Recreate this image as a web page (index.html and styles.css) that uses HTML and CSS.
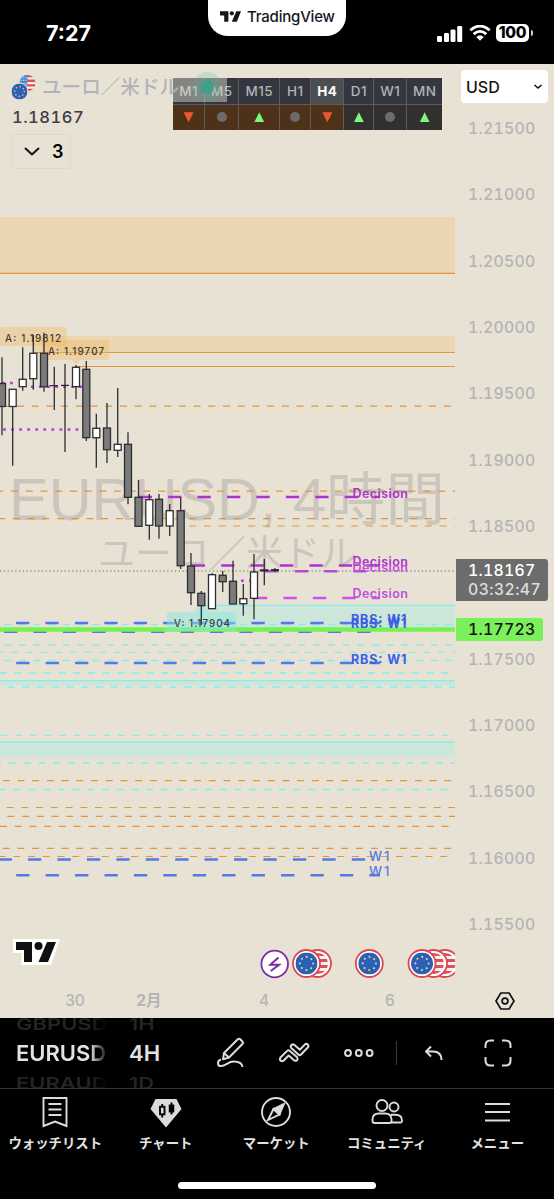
FILE: index.html
```html
<!DOCTYPE html>
<html lang="ja">
<head>
    <meta charset="utf-8">
    <title>EURUSD 4H - TradingView</title>
    <link rel="stylesheet" href="styles.css">
</head>
<body>
    <svg class="defs" width="0" height="0">
        <symbol id="eu" viewBox="0 0 24 24">
            <circle cx="12" cy="12" r="12" fill="#2a60b8"/>
            <circle cx="12" cy="12" r="7.2" fill="none" stroke="#e8d672" stroke-width="2.3" stroke-linecap="round" stroke-dasharray="0.01 5.645"/>
        </symbol>
        <symbol id="us" viewBox="0 0 24 24">
            <clipPath id="round"><circle cx="12" cy="12" r="12"/></clipPath>
            <g clip-path="url(#round)">
                <rect width="24" height="24" fill="#f5f0f0"/>
                <path d="M0 1.7h24M0 8.6h24M0 15.5h24M0 22.4h24" stroke="#dd5055" stroke-width="3.5"/>
                <rect width="12" height="13" fill="#4a8fd8"/>
                <path d="M2 4h10M2 8h10" stroke="#fff" stroke-width="1.2" stroke-dasharray="1.5 2"/>
            </g>
        </symbol>
        <symbol id="tv" viewBox="0 0 40 20">
            <path d="M0 0h16v20H8V8H0zM33 0h7l-8 20h-9.500L31 0z"/>
            <circle cx="22.500" cy="4" r="4"/>
        </symbol>
    </svg>

    <div class="app">
        <header class="status-bar">
            <div class="time">7:27</div>
            <div class="brand">
                <svg width="21" height="11"><use href="#tv"/></svg>
                <span>TradingView</span>
            </div>
            <div class="status-icons">
                <svg width="26" height="17" viewBox="0 0 26 17" fill="#fff">
                    <rect x="0" y="11" width="5" height="6" rx="1.300"/>
                    <rect x="7" y="8" width="5" height="9" rx="1.300"/>
                    <rect x="13.500" y="4.500" width="5" height="12.500" rx="1.300"/>
                    <rect x="20.200" y="1" width="5" height="16" rx="1.300"/>
                </svg>
                <svg width="22" height="16" viewBox="0 0 22 16" fill="none" stroke="#fff" stroke-width="2.800">
                    <path d="M1.300 5.300Q11-3.200 20.700 5.300"/>
                    <path d="M4.700 9.100Q11 3.700 17.300 9.100"/>
                    <path d="M11 15.800L7.300 11.900Q11 8.700 14.700 11.900z" fill="#fff" stroke="none"/>
                </svg>
                <div class="battery">100</div>
            </div>
        </header>

        <main class="chart">
            <div class="plot">
                <svg class="series" width="455" height="921" viewBox="0 64 455 921">
                    <!-- watermark -->
                    <g class="watermark">
                        <text x="9" y="520" font-size="58.500" textLength="436" lengthAdjust="spacingAndGlyphs">EURUSD, 4時間</text>
                        <text x="98" y="567" font-size="37" textLength="259">ユーロ／米ドル</text>
                    </g>

                    <!-- supply and demand zones -->
                    <g class="supply">
                        <rect x="0" y="217" width="455" height="56"/>
                        <rect x="33" y="336" width="422" height="16.500"/>
                    </g>
                    <g class="demand">
                        <rect x="198" y="605" width="257" height="24"/>
                        <rect x="0" y="681" width="455" height="4.500"/>
                        <rect x="0" y="741.500" width="455" height="15.500"/>
                    </g>
                    <path class="orange" d="M0 273.300H455M33 352.500H455M75 366.500H455"/>
                    <path class="cyan" d="M198 605.300H455M0 680.700H455M0 742H455"/>
                    <path class="orange dash" d="M2.200 406.200H455M-3.700 491.200H455M-1.900 518.700H455M189.300 526H455M2.700 780.700H455M6.700 807.500H455M7.300 816.300H455M0 826.400H455M2.700 848.400H455M-1.400 856.500H455"/>
                    <path class="cyan dash" d="M4 624.700H455M4 645H455M-4 652.400H455M4 660.500H455M-.4 673H455M-7 687H455M.3 735.400H455M-5.700 763H455M-1 789.500H455"/>

                    <!-- labelled levels -->
                    <path class="level w1" d="M16 622.900H380M4 631.800H373M16.200 662.900H380M-1.400 859.600H380M16.200 875.300H380"/>
                    <path class="level decision" d="M138.700 497H380M191.700 565.500H380"/>
                    <path class="level decision-mid" d="M265.300 571.300H366"/>
                    <path class="level decision-new" d="M254 598.100H380"/>
                    <path class="dots" d="M3.100 429.500H90M31 386.700H84M2 383H16M241 580.700H252M41.500 378.700H44"/>

                    <path class="live" d="M0 629.500H455"/>
                    <path class="price-line" d="M0 571H455"/>

                    <g class="tag-high">
                        <rect x="0" y="327" width="66.500" height="19" rx="2"/>
                        <path d="M42 340H107a2 2 0 0 1 2 2V358a2 2 0 0 1-2 2H80L76 365L72 360H42z"/>
                    </g>
                    <path class="tag-low" d="M169 612H194L201 605L208 612H234a2 2 0 0 1 2 2V629a2 2 0 0 1-2 2H169a2 2 0 0 1-2-2V614a2 2 0 0 1 2-2z"/>

                    <!-- candles -->
                    <g class="down">
                        <path d="M2 357.300V435.300M44 332.700V391.700M86.300 361V441M107 403V463M128 432.300V504.300M138.500 480V526M159 494V538.700M180.700 497.300V569M191 553V605M201.300 591V625M222.700 571V592M233 560.700V604"/>
                        <rect x="-1.500" y="383.500" width="7" height="23"/>
                        <rect x="40.500" y="353.300" width="7" height="33.400"/>
                        <rect x="82.800" y="369.300" width="7" height="68.400"/>
                        <rect x="103.500" y="428" width="7" height="21.700"/>
                        <rect x="124.500" y="444.300" width="7" height="53"/>
                        <rect x="135" y="497.300" width="7" height="29"/>
                        <rect x="155.500" y="499.300" width="7" height="26.700"/>
                        <rect x="177.200" y="510.700" width="7" height="55"/>
                        <rect x="187.500" y="566" width="7" height="26.700"/>
                        <rect x="197.800" y="593.300" width="7" height="12.400"/>
                        <rect x="219.200" y="575.300" width="7" height="6.400"/>
                        <rect x="229.500" y="581.300" width="7" height="22.700"/>
                    </g>
                    <g class="up">
                        <path d="M12.700 389V465.700M22.700 347.300V390.700M33.300 335V389.700M76 365V399.300M96.300 413.700V467.700M117.700 388V457M149.300 494V539.700M169.700 504V536M212 573V608M243.300 584V615.700M254 554V619.300"/>
                        <rect x="9.200" y="389.300" width="7" height="17.200"/>
                        <rect x="19.200" y="379.300" width="7" height="7.400"/>
                        <rect x="29.800" y="353.300" width="7" height="25.400"/>
                        <rect x="72.500" y="367.300" width="7" height="19.400"/>
                        <rect x="92.800" y="428.300" width="7" height="9.400"/>
                        <rect x="114.200" y="444.300" width="7" height="6"/>
                        <rect x="145.800" y="499.700" width="7" height="25.600"/>
                        <rect x="166.200" y="510.700" width="7" height="15.300"/>
                        <rect x="208.500" y="574.700" width="7" height="34"/>
                        <rect x="239.800" y="598.700" width="7" height="5"/>
                        <rect x="250.500" y="572" width="7" height="26.300"/>
                    </g>
                    <path class="doji" d="M54.300 366.700V410M50 385.700H58M65 364V452M61 385.300H69M264.300 559V585.300M275 568V572"/>
                    <path class="doji thick" d="M260 570.400H268.500M271 570H279"/>

                    <g class="marks">
                        <text x="5" y="341.500" textLength="56">A: 1.19812</text>
                        <text x="48" y="355" textLength="56">A: 1.19707</text>
                        <text x="174" y="626.500" textLength="56">V: 1.17904</text>
                    </g>
                    <g class="level-text">
                        <text class="t-decision" x="352.500" y="498" textLength="55.500">Decision</text>
                        <text class="t-decision" x="352.500" y="566" textLength="55.500">Decision</text>
                        <text class="t-new" x="352.500" y="571.500" textLength="55.500">Decision</text>
                        <text class="t-new" x="352.500" y="598.300" textLength="55.500">Decision</text>
                        <text class="t-rbs" x="351" y="623.500" textLength="55.500">RBS: W1</text>
                        <text class="t-rbs" x="351" y="627.500" textLength="55.500">RBS: W1</text>
                        <text class="t-rbs" x="351" y="664" textLength="55.500">RBS: W1</text>
                        <text class="t-w1" x="369" y="860.500" textLength="20.500">W1</text>
                        <text class="t-w1" x="369" y="875.500" textLength="20.500">W1</text>
                    </g>

                    <!-- logo -->
                    <path d="M13 939H60L51 965H21.500V953H13z" fill="#fff"/>
                    <use href="#tv" x="16" y="942" width="40" height="20" fill="#101010"/>

                    <!-- economic events -->
                    <g class="event-flash">
                        <circle cx="274.700" cy="964" r="13.300"/>
                        <path d="M278.500 957.500L270.300 964.800H279L270.800 971"/>
                    </g>
                    <g class="event">
                        <circle cx="317.500" cy="963.500" r="13.500"/>
                        <use href="#us" x="307" y="953" width="21" height="21"/>
                        <circle cx="306.500" cy="963.500" r="13.500"/>
                        <use href="#eu" x="295.500" y="952.500" width="22" height="22"/>
                        <circle cx="369.300" cy="963.500" r="13.500"/>
                        <use href="#eu" x="358.300" y="952.500" width="22" height="22"/>
                        <circle cx="445" cy="963.500" r="13.500"/>
                        <use href="#us" x="434.500" y="953" width="21" height="21"/>
                        <circle cx="433.500" cy="963.500" r="13.500"/>
                        <use href="#us" x="423" y="953" width="21" height="21"/>
                        <circle cx="422" cy="963.500" r="13.500"/>
                        <use href="#eu" x="411" y="952.500" width="22" height="22"/>
                    </g>
                </svg>

                <table class="mtf">
                    <colgroup>
                        <col style="width:31.700px"><col style="width:34px"><col style="width:41px"><col style="width:31px">
                        <col style="width:33px"><col style="width:30px"><col style="width:33px"><col style="width:35px">
                    </colgroup>
                    <tr>
                        <th>M1</th><th>M5</th><th>M15</th><th>H1</th><th class="current">H4</th><th>D1</th><th>W1</th><th>MN</th>
                    </tr>
                    <tr>
                        <td class="warm"><i class="fall"></i></td>
                        <td class="warm"><i class="flat"></i></td>
                        <td class="warm"><i class="rise"></i></td>
                        <td class="warm"><i class="flat"></i></td>
                        <td class="warm"><i class="fall"></i></td>
                        <td><i class="rise"></i></td>
                        <td><i class="flat"></i></td>
                        <td><i class="rise"></i></td>
                    </tr>
                </table>

                <div class="legend">
                    <div class="symbol">
                        <svg width="26" height="26" viewBox="0 0 26 26">
                            <use href="#us" x="8.500" y="0" width="16" height="16"/>
                            <circle cx="8.500" cy="16.500" r="9" fill="#e8e2d5"/>
                            <use href="#eu" x=".5" y="8.500" width="16" height="16"/>
                        </svg>
                        <span>ユーロ／米ドル</span>
                    </div>
                    <div class="last">1.18167</div>
                    <div class="indicators">
                        <svg width="18" height="11" viewBox="0 0 18 11"><path d="M2 2l7 6.500L16 2" fill="none" stroke="#111" stroke-width="2"/></svg>
                        <span>3</span>
                    </div>
                </div>
                <div class="market-open"></div>
            </div>

            <aside class="price-axis">
                <div class="currency">
                    <span>USD</span>
                    <svg width="10" height="6" viewBox="0 0 10 6"><path d="M1.500 1l3.500 3 3.500-3" fill="none" stroke="#111" stroke-width="1.600"/></svg>
                </div>
                <ul class="prices">
                    <li>1.21500</li>
                    <li>1.21000</li>
                    <li>1.20500</li>
                    <li>1.20000</li>
                    <li>1.19500</li>
                    <li>1.19000</li>
                    <li>1.18500</li>
                    <li class="covered"></li>
                    <li>1.17500</li>
                    <li>1.17000</li>
                    <li>1.16500</li>
                    <li>1.16000</li>
                    <li>1.15500</li>
                </ul>
                <div class="price-tag now">1.18167<span>03:32:47</span></div>
                <div class="price-tag alert">1.17723</div>
            </aside>

            <div class="time-axis">
                <span>30</span>
                <span class="month">2月</span>
                <span>4</span>
                <span>6</span>
                <svg width="20" height="18" viewBox="0 0 20 18" fill="none" stroke="#111" stroke-width="1.700">
                    <path d="M5.800 1h8.400L19 9l-4.800 8H5.800L1 9z"/>
                    <circle cx="10" cy="9" r="2.900"/>
                </svg>
            </div>
        </main>

        <div class="toolbar">
            <div class="wheel wheel-symbol">
                <span class="off">GBPUSD</span>
                <span>EURUSD</span>
                <span class="off">EURAUD</span>
            </div>
            <div class="wheel wheel-interval">
                <span class="off">1H</span>
                <span>4H</span>
                <span class="off">1D</span>
            </div>
            <div class="tools">
                <svg width="30" height="32" viewBox="0 0 30 32">
                    <path d="M8 16L21.500 2.500q1.500-1.500 3 0l1.700 1.700q1.500 1.500 0 3L13 20.500l-6 1.700zM8 16l5 4.500"/>
                    <path d="M5 22.500C1 23.500 1 29 5 29c5 0 7-4.500 12.500-4.500 4.500 0 8.500 1.500 9 5.500"/>
                </svg>
                <svg width="32" height="22" viewBox="0 0 32 22">
                    <path d="M2.200 15.800L9.200 8.900q1.300-1.400 2.600 0l7.400 6.300q1 1.800-.2 3-1.500 1.200-3 0l-5.300-4.700-5 5q-1.700 1.400-3.200.1-1-1.200-.3-2.800z"/>
                    <path d="M13 3.500q1.700-2 3.500-.5l5.300 4.800 5-5.200q1.500-1.400 3-.1 1.100 1.200.2 2.700l-7 7.300q-1.300 1.300-2.700 0L13.300 6q-1-1.200-.3-2.500z"/>
                </svg>
                <svg width="30" height="10" viewBox="0 0 30 10">
                    <circle cx="4" cy="5" r="2.900"/><circle cx="14.800" cy="5" r="2.900"/><circle cx="25.600" cy="5" r="2.900"/>
                </svg>
                <i class="divider"></i>
                <svg width="20" height="16" viewBox="0 0 20 16"><path d="M7 1.500L2 6.500l5 5M2 6.500h7q8.500 0 8.500 8.500"/></svg>
                <svg width="28" height="28" viewBox="0 0 28 28"><path d="M1.500 9V6.500q0-5 5-5H10M18 1.500h3.500q5 0 5 5V9M26.500 18v3.500q0 5-5 5H18M10 26.500H6.500q-5 0-5-5V18"/></svg>
            </div>
        </div>

        <nav class="tabs">
            <a class="tab">
                <svg width="32" height="32" viewBox="0 0 32 32"><path d="M4.500 2h23v28L16 25.500 4.500 30zM9.500 8h13M9.500 13.500h13M9.500 19h13"/></svg>
                <span>ウォッチリスト</span>
            </a>
            <a class="tab">
                <svg width="32" height="32" viewBox="0 0 32 32">
                    <path d="M5.500 3h21L31.500 13 16 31.500.5 13z" fill="#dcdcdc" stroke="none"/>
                    <path d="M12.200 8v3M12.200 18v3.500M21.500 6.500v12" stroke="#050505"/>
                    <rect x="10" y="10.800" width="4.500" height="7.500" fill="#dcdcdc" stroke="#050505"/>
                    <rect x="19.700" y="9.500" width="3.600" height="6" fill="#050505" stroke="#050505"/>
                </svg>
                <span>チャート</span>
            </a>
            <a class="tab">
                <svg width="32" height="32" viewBox="0 0 32 32">
                    <circle cx="16" cy="16" r="14"/>
                    <path d="M24 8L19.500 18.500l-6-5.500z" fill="#dcdcdc"/>
                    <path d="M13.500 13L8 24l11.500-5.500z"/>
                </svg>
                <span>マーケット</span>
            </a>
            <a class="tab">
                <svg width="32" height="32" viewBox="0 0 32 32">
                    <circle cx="11" cy="9.500" r="5.500"/>
                    <circle cx="23" cy="11" r="4.500"/>
                    <path d="M1.500 25v-1.500q0-6 6.500-6h6q6.500 0 6.500 6V25q0 2-2 2h-15q-2 0-2-2zM20 18.800h4.500q6.500 0 6.500 5.700v.5q0 1.500-1.500 1.500H20"/>
                </svg>
                <span>コミュニティ</span>
            </a>
            <a class="tab">
                <svg width="32" height="32" viewBox="0 0 32 32"><path d="M4 8h25M4 16h25M4 24.500h25"/></svg>
                <span>メニュー</span>
            </a>
        </nav>
        <div class="home-bar"></div>
    </div>
</body>
</html>
```
FILE: styles.css
```css
:root {
    --paper: #e8e2d5;
    --axis-text: #b4b4b5;
    --icon: #dcdcdc;
    --orange: #e2953a;
    --cyan: #83efe8;
}
* {
    box-sizing: border-box;
}
body {
    margin: 0;
    background: #000;
    font-family: Inter, "Noto Sans CJK JP", sans-serif;
}
.defs {
    position: absolute;
}
.app {
    display: flex;
    flex-direction: column;
    width: 554px;
    height: 1199px;
    overflow: hidden;
}

/* status bar */
.status-bar {
    display: grid;
    grid-template-columns: 208px 138px 1fr;
    height: 64px;
    color: #fff;
}
.time {
    padding: 20px 0 0 46px;
    font-size: 21.500px;
    font-weight: 700;
    line-height: 26px;
}
.brand {
    display: flex;
    align-items: center;
    gap: 6px;
    height: 36px;
    padding: 0 0 3px 12px;
    border-radius: 0 0 20px 20px;
    background: #fff;
    color: #15171f;
    fill: #15171f;
    font-size: 15px;
    font-weight: 500;
    letter-spacing: -0.200px;
}
.status-icons {
    display: flex;
    align-items: center;
    gap: 6px;
    height: 18px;
    margin: 24px 0 0 91px;
}
.battery {
    position: relative;
    width: 33px;
    height: 18px;
    margin-left: -1px;
    border-radius: 5px;
    background: #fff;
    color: #000;
    font-size: 15.500px;
    font-weight: 800;
    line-height: 18px;
    text-align: center;
    letter-spacing: -0.300px;
}
.battery::after {
    content: "";
    position: absolute;
    right: -3.500px;
    top: 6px;
    width: 2px;
    height: 6px;
    border-radius: 0 2px 2px 0;
    background: #ccc;
}

/* chart */
.chart {
    display: grid;
    grid-template-columns: 455px 99px;
    grid-template-rows: 921px 33px;
    height: 954px;
    background: var(--paper);
}
.plot {
    position: relative;
}
.series {
    display: block;
}
.watermark {
    fill: #cbc5bb;
    font-family: "Liberation Sans", "Noto Sans CJK JP", sans-serif;
    font-weight: 400;
}
.supply {
    fill: #ecc88a;
    fill-opacity: 0.450;
}
.demand {
    fill: #a8ebe2;
    fill-opacity: 0.420;
}
.orange {
    stroke: var(--orange);
    stroke-width: 1.200;
}
.cyan {
    stroke: var(--cyan);
    stroke-width: 1.300;
}
.dash {
    stroke-dasharray: 7 7.720;
}
.level {
    stroke-width: 2.500;
    stroke-dasharray: 13.300 16.130;
}
.w1 {
    stroke: #5478e4;
}
.decision {
    stroke: #ae34d2;
}
.decision-mid {
    stroke: #bd48de;
}
.decision-new {
    stroke: #cf52ea;
}
.dots {
    stroke: #b63fda;
    stroke-width: 2.600;
    stroke-dasharray: 2.800 5.250;
}
.live {
    stroke: #76f052;
    stroke-width: 4.300;
}
.price-line {
    stroke: #716d66;
    stroke-width: 1.200;
    stroke-dasharray: 1.300 2.500;
}
.tag-high {
    fill: #f0b860;
    fill-opacity: 0.400;
}
.tag-low {
    fill: #88e8df;
    fill-opacity: 0.500;
}
.up, .down, .doji {
    stroke: #2e2e31;
    stroke-width: 1.300;
}
.up rect {
    fill: #fff;
}
.down rect {
    fill: #7b7b7c;
}
.doji.thick {
    stroke-width: 2.200;
}
.marks {
    fill: #3e3c39;
    font-size: 9.800px;
    font-weight: 500;
}
.level-text {
    font-size: 12.500px;
    font-weight: 600;
}
.t-decision {
    fill: #ad32cc;
}
.t-new {
    fill: #c24edd;
}
.t-rbs {
    fill: #3b5ee6;
    font-weight: 700;
}
.t-w1 {
    fill: #5478e4;
    font-size: 13px;
    font-weight: 500;
}
.event circle {
    fill: #fff;
    stroke: #dc4a50;
    stroke-width: 1.800;
}
.event-flash {
    fill: #fff;
    stroke: #7e2ba6;
    stroke-width: 1.800;
}
.event-flash path {
    fill: none;
    stroke-width: 2;
}

/* multi-timeframe table */
.mtf {
    position: absolute;
    left: 173px;
    top: 14px;
    width: 269px;
    table-layout: fixed;
    border-collapse: collapse;
    color: #b1b2b6;
    font-size: 13.500px;
    text-align: center;
}
.mtf th, .mtf td {
    height: 26px;
    padding: 0;
    border-left: 1px solid #5b5a5c;
}
.mtf th:first-child, .mtf td:first-child {
    border-left: none;
}
.mtf th {
    background: #343740;
    border-bottom: 1px solid #5b5a5c;
    font-weight: 500;
    letter-spacing: 0.500px;
}
.mtf .current {
    background: #4c4f52;
    color: #fff;
    font-weight: 700;
}
.mtf td {
    background: #32302e;
}
.mtf .warm {
    background: #4e3119;
}
.mtf i {
    display: block;
    width: 10px;
    height: 10px;
    margin: 0 auto;
}
.rise {
    background: #78f982;
    clip-path: polygon(50% 0, 100% 100%, 0 100%);
}
.fall {
    background: #f0562e;
    clip-path: polygon(0 0, 100% 0, 50% 100%);
}
.flat {
    border-radius: 50%;
    background: #6d6b6b;
}

/* legend */
.legend {
    position: absolute;
    left: 11px;
    top: 10px;
}
.symbol {
    display: flex;
    align-items: center;
    gap: 5px;
    width: 216px;
    height: 28px;
    color: #b2b3b9;
    font-size: 19.600px;
    font-weight: 500;
    line-height: 26px;
    white-space: nowrap;
    background: linear-gradient(rgba(232, 226, 213, 0.45), rgba(232, 226, 213, 0.45)) 162px 4px / 54px 26px no-repeat;
}
.symbol span {
    padding-bottom: 2px;
}
.last {
    margin-top: 4px;
    padding-left: 1px;
    color: #3d3d42;
    font-size: 16.500px;
    font-weight: 500;
    font-variant-numeric: tabular-nums;
    line-height: 22px;
    letter-spacing: 0.500px;
}
.indicators {
    display: flex;
    align-items: center;
    gap: 11px;
    width: 60px;
    height: 35px;
    margin-top: 6px;
    padding-left: 11px;
    border: 1px solid #dcd9d2;
    border-radius: 3px;
    font-size: 18px;
    font-weight: 600;
}
.market-open {
    position: absolute;
    left: 200px;
    top: 16px;
    width: 14px;
    height: 14px;
    border-radius: 50%;
    background: #42a088;
    box-shadow: 0 0 0 8px rgba(66, 180, 150, 0.2);
}

/* price axis */
.price-axis {
    position: relative;
    padding: 6px 0 0 6px;
    font-variant-numeric: tabular-nums;
}
.currency {
    display: flex;
    align-items: center;
    justify-content: space-between;
    width: 87px;
    height: 33px;
    padding: 0 5px;
    border-radius: 4px;
    background: #fff;
    color: #111;
    font-size: 16px;
    font-weight: 500;
}
.prices {
    margin: -7px 0 0;
    padding: 0 0 0 7px;
    list-style: none;
    color: var(--axis-text);
    font-size: 15.800px;
    font-weight: 500;
    letter-spacing: 0.250px;
}
.prices li {
    height: 66.350px;
    line-height: 66.350px;
}
.price-tag {
    position: absolute;
    left: 1px;
    padding-left: 12px;
    border-radius: 0 3px 3px 0;
    font-size: 15.800px;
    font-weight: 500;
    letter-spacing: 0.250px;
}
.price-tag span {
    display: block;
    color: #dedede;
    letter-spacing: 0.400px;
}
.now {
    top: 495px;
    width: 92px;
    height: 42px;
    padding-top: 3px;
    background: #6c6c6c;
    color: #fff;
    line-height: 18.500px;
}
.alert {
    top: 554px;
    width: 87px;
    height: 23px;
    background: #7af05a;
    color: #111;
    line-height: 24px;
}
.time-axis {
    grid-column: 1 / 3;
    display: grid;
    grid-template-columns: 74px 74px 156px 96px 116px;
    align-items: center;
    justify-items: center;
    padding: 0 0 2px 38px;
    color: var(--axis-text);
    font-size: 15.500px;
    font-weight: 500;
}
.time-axis .month {
    font-weight: 700;
    line-height: 20px;
}
.time-axis svg {
    margin-left: 18px;
}

/* drawing toolbar */
.toolbar {
    display: flex;
    height: 71px;
    overflow: hidden;
    border-bottom: 1px solid #333;
}
.wheel {
    display: flex;
    flex-direction: column;
    justify-content: center;
    color: #e2e2e2;
    font-size: 22px;
    font-weight: 600;
    line-height: 35px;
}
.wheel .off {
    height: 24px;
    color: #242424;
    line-height: 24px;
    transform: scaleY(0.75);
}
.wheel-symbol {
    width: 90px;
    margin-left: 16px;
    overflow: hidden;
    -webkit-mask-image: linear-gradient(90deg, #000 74px, transparent 92px);
    mask-image: linear-gradient(90deg, #000 74px, transparent 92px);
}
.wheel-interval {
    width: 60px;
    margin-left: 23px;
}
.tools {
    display: flex;
    align-items: center;
    margin-left: 27px;
    fill: none;
    stroke: var(--icon);
    stroke-width: 2;
    stroke-linejoin: round;
}
.tools svg:nth-of-type(2) {
    margin-left: 32px;
}
.tools svg:nth-of-type(3) {
    margin-left: 34px;
}
.divider {
    width: 1px;
    height: 24px;
    margin: 0 27px 0 22px;
    background: #3a3a3a;
}
.tools svg:last-child {
    margin-left: 40px;
}

/* bottom tabs */
.tabs {
    display: grid;
    grid-template-columns: repeat(5, 110.500px);
    padding-top: 7px;
}
.tab {
    display: flex;
    flex-direction: column;
    align-items: center;
    color: #e2e2e2;
    fill: none;
    stroke: var(--icon);
    stroke-width: 1.900;
    font-size: 13.400px;
    font-weight: 700;
    line-height: 20px;
    white-space: nowrap;
}
.tab span {
    margin-top: 5px;
}
.home-bar {
    width: 198px;
    height: 7px;
    margin: 29px auto 0;
    border-radius: 4px;
    background: #fff;
}
```
